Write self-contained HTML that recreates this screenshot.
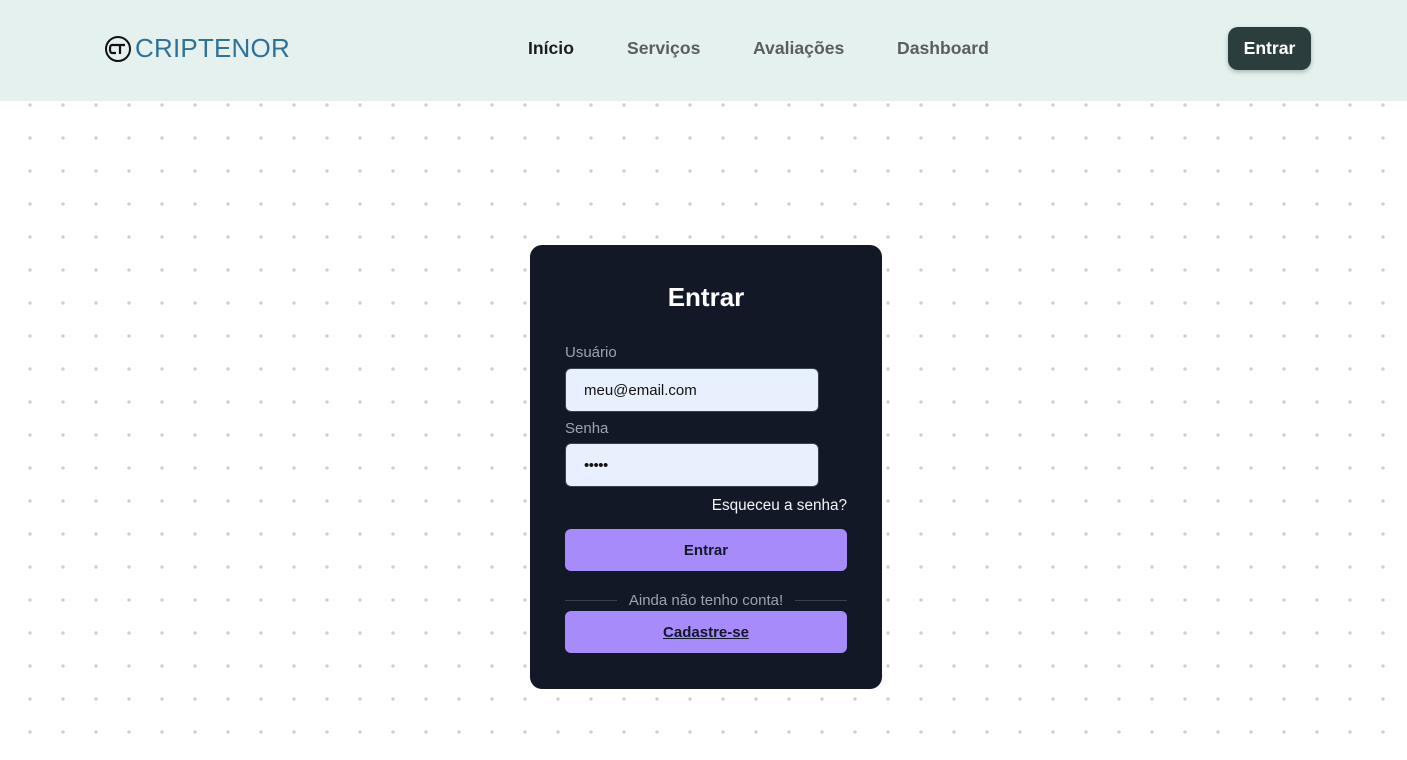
<!DOCTYPE html>
<html><head><meta charset="utf-8"><style>
*{box-sizing:border-box;margin:0;padding:0}
body{width:1407px;height:760px;overflow:hidden;font-family:"Liberation Sans",sans-serif;background:#fff radial-gradient(circle at center,#cfcfcf 1.4px,transparent 2px);background-size:33px 33px;background-position:13.5px 22.5px;position:relative}
header{position:absolute;left:0;top:0;width:1407px;height:101px;background:#e4f1ee}
.logo{position:absolute;left:104px;top:33px;display:flex;align-items:center;color:#2f7197;font-size:26px;letter-spacing:0.2px}
.logo svg{margin-right:3px}
nav a{position:absolute;top:38px;font-size:17.6px;font-weight:bold;color:#5d5d5d;text-decoration:none}
.btn-top{position:absolute;left:1228px;top:27px;width:83px;height:43px;background:#2c3d3d;color:#fff;border-radius:10px;font-weight:bold;font-size:17.6px;display:flex;align-items:center;justify-content:center;box-shadow:0 2px 5px rgba(0,0,0,.25)}
.card{position:absolute;left:530px;top:245px;width:352px;height:444px;background:#121826;border-radius:12px}
.card h1{position:absolute;top:37px;width:100%;text-align:center;color:#fff;font-size:26px}
.lbl{position:absolute;left:35px;color:#9ca3af;font-size:15px}
.inp{position:absolute;left:35px;width:254px;height:44px;background:#e8f0fe;border:1px solid #374151;border-radius:6px;padding-left:18px;display:flex;align-items:center;font-size:15px;color:#111}
.forgot{position:absolute;right:35px;top:252px;color:#f3f4f6;font-size:15.3px}
.b{position:absolute;left:35px;width:282px;height:42px;background:#a78bfa;border-radius:6px;display:flex;align-items:center;justify-content:center;font-weight:bold;font-size:15px;color:#111827}
.sep{position:absolute;left:35px;top:347px;width:282px;display:flex;align-items:center;color:#9ca3af;font-size:15px}
.sep i{flex:1;height:1px;background:#374151}
.sep span{padding:0 12px}
</style></head><body>
<header>
<div class="logo"><svg width="28" height="28" viewBox="0 0 28 28"><circle cx="14" cy="14" r="12" fill="none" stroke="#111" stroke-width="2"/><path d="M12 10H8Q6 10 6 14Q6 18 8 18H12M10 10H21M16 10V19" fill="none" stroke="#111" stroke-width="2.2"/></svg>CRIPTENOR</div>
<nav><a style="left:528px;color:#1c1c1c">Início</a><a style="left:627px">Serviços</a><a style="left:753px">Avaliações</a><a style="left:897px">Dashboard</a></nav>
<div class="btn-top">Entrar</div>
</header>
<div class="card">
<h1>Entrar</h1>
<div class="lbl" style="top:99px">Usuário</div>
<div class="inp" style="top:123px">meu@email.com</div>
<div class="lbl" style="top:175px">Senha</div>
<div class="inp" style="top:198px;font-size:15px;letter-spacing:-0.5px">•••••</div>
<div class="forgot">Esqueceu a senha?</div>
<div class="b" style="top:284px">Entrar</div>
<div class="sep"><i></i><span>Ainda não tenho conta!</span><i></i></div>
<div class="b" style="top:366px;text-decoration:underline">Cadastre-se</div>
</div>
</body></html>
